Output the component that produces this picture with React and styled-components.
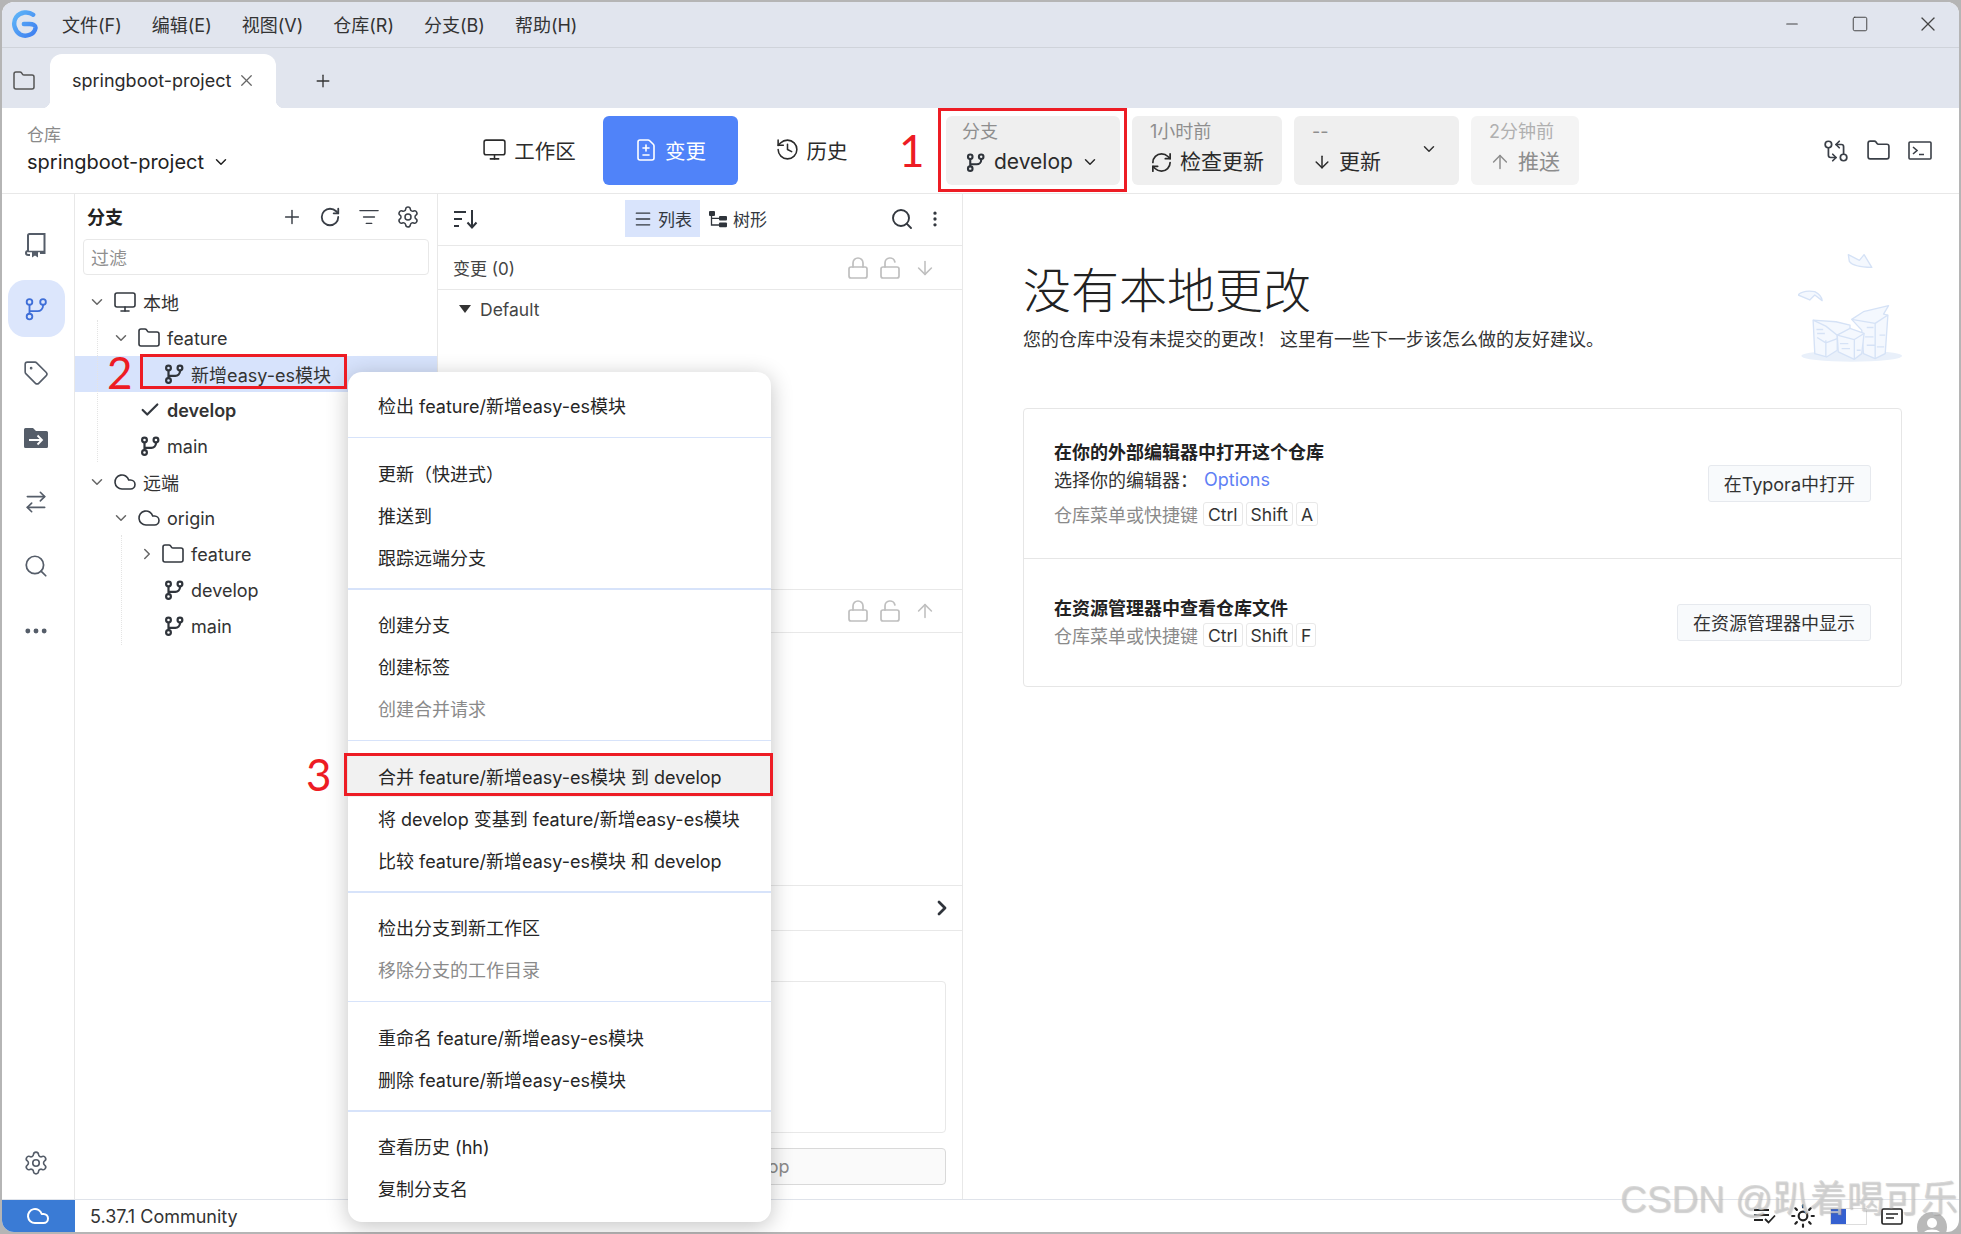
import styled, { createGlobalStyle } from "styled-components";
import {
  ArrowDown, ArrowRightLeft, ArrowUp, Check, ChevronDown, ChevronRight, Cloud, Ellipsis,
  EllipsisVertical, FileDiff, Folder, GitCompareArrows, History, ListFilter, Lock, LockOpen,
  Menu as MenuLines, Minus, Monitor, Plus, RefreshCw, RotateCw, Search, Settings, Square, Sun, Tag, X,
} from "lucide-react";

const GlobalStyle = createGlobalStyle`
  html, body { margin: 0; padding: 0; background: #b5b5b5; }
  * { box-sizing: border-box; }
  body {
    font-family: Inter, "Noto Sans CJK SC", sans-serif;
    font-size: 18px;
    color: #2b2b2b;
  }
`;

const Frame = styled.div`
  position: relative;
  width: 1961px;
  height: 1234px;
  padding: 2px;
  background: #b5b5b5;
  overflow: hidden;
`;

const Window = styled.div`
  display: flex;
  flex-direction: column;
  height: 100%;
  background: #fff;
  border-radius: 12px;
  overflow: hidden;
`;

/* title bar */
const TitleBar = styled.div`
  display: flex;
  align-items: center;
  height: 46px;
  flex: none;
  background: #e1e5ee;
  border-bottom: 1px solid #cfd3da;
  padding: 0 0 2px 9px;
`;

const MenuBar = styled.div`
  display: flex;
  gap: 30px;
  margin-left: 23px;
`;

const MenuLabel = styled.span`
  font-size: 18px;
  color: #333;
`;

const WinControls = styled.div`
  display: flex;
  gap: 6px;
  margin-left: auto;
`;

const WinButton = styled.div`
  display: flex;
  align-items: center;
  justify-content: center;
  width: 62px;
  color: #444;
`;

/* tabs */
const TabBar = styled.div`
  display: flex;
  align-items: flex-end;
  height: 60px;
  flex: none;
  background: #e1e5ee;
`;

const TabFolder = styled.div`
  display: flex;
  align-items: center;
  justify-content: center;
  width: 48px;
  height: 54px;
  padding-right: 5px;
  color: #555;
`;

const Tab = styled.div`
  position: relative;
  display: flex;
  align-items: center;
  gap: 6px;
  width: 226px;
  height: 54px;
  padding: 0 0 2px 22px;
  background: #fff;
  border-radius: 12px 12px 0 0;
  &::before, &::after {
    content: "";
    position: absolute;
    bottom: 0;
    width: 8px;
    height: 8px;
  }
  &::before { left: -8px; background: radial-gradient(circle at 0 0, #e1e5ee 8px, #fff 8.5px); }
  &::after { right: -8px; background: radial-gradient(circle at 100% 0, #e1e5ee 8px, #fff 8.5px); }
`;

const TabAdd = styled.div`
  display: flex;
  align-items: center;
  height: 54px;
  margin-left: 37px;
  color: #333;
`;

/* toolbar */
const Toolbar = styled.div`
  display: flex;
  align-items: center;
  height: 86px;
  flex: none;
  border-bottom: 1px solid #e8e8e8;
`;

const RepoBlock = styled.div`
  width: 459.5px;
  padding: 0 0 2px 25px;
`;

const RepoLabel = styled.div`
  font-size: 17px;
  line-height: 24px;
  color: #8a8a8a;
`;

const RepoName = styled.div`
  display: flex;
  align-items: center;
  gap: 8px;
  font-size: 20px;
  line-height: 30px;
  color: #222;
`;

const NavGroup = styled.div`
  display: flex;
  gap: 6px;
`;

const NavItem = styled.div`
  display: flex;
  align-items: center;
  justify-content: center;
  gap: 7px;
  width: 135px;
  height: 69px;
  padding-bottom: 2px;
  font-size: 20.5px;
  border-radius: 6px;
  color: ${(p) => (p.$active ? "#fff" : "#2b2b2b")};
  background: ${(p) => (p.$active ? "#5083f9" : "transparent")};
`;

const ActionGroup = styled.div`
  display: flex;
  gap: 12px;
  margin-left: 67.5px;
`;

const ActionButton = styled.div`
  position: relative;
  display: flex;
  flex-direction: column;
  justify-content: center;
  width: ${(p) => p.$w}px;
  height: 69px;
  padding: 0 0 3px ${(p) => p.$pad || 18}px;
  border-radius: 6px;
  background: ${(p) => (p.$muted ? "#f4f4f4" : "#efefef")};
`;

const ActionLabel = styled.div`
  font-size: 18px;
  line-height: 26px;
  color: ${(p) => (p.$muted ? "#b0b0b0" : "#8e8e8e")};
`;

const ActionMain = styled.div`
  display: flex;
  align-items: center;
  gap: ${(p) => p.$gap || 7}px;
  padding-left: ${(p) => p.$indent || 0}px;
  font-size: 21px;
  line-height: 34px;
  color: ${(p) => (p.$muted ? "#8d8d8d" : "#2b2b2b")};
`;

const Caret = styled.div`
  position: absolute;
  top: 24px;
  right: 21px;
  display: flex;
  color: #333;
`;

const ToolIcons = styled.div`
  display: flex;
  align-items: center;
  gap: 17px;
  margin-left: auto;
  padding-right: 27.5px;
  color: #3a3f47;
`;

/* body */
const Body = styled.div`
  display: flex;
  flex: 1;
  min-height: 0;
`;

const Rail = styled.div`
  display: flex;
  flex-direction: column;
  align-items: center;
  gap: 7.4px;
  width: 73px;
  flex: none;
  padding: 22px 4px 8px 0;
  border-right: 1px solid #e8e8e8;
  color: #555d69;
`;

const RailItem = styled.div`
  display: flex;
  align-items: center;
  justify-content: center;
  width: 57px;
  height: 57px;
  flex: none;
  border-radius: 17px;
  margin-top: ${(p) => (p.$bottom ? "auto" : "0")};
  color: ${(p) => (p.$active ? "#3f6fd8" : "inherit")};
  background: ${(p) => (p.$active ? "#dce6fc" : "transparent")};
`;

const BranchPanel = styled.div`
  width: 363px;
  flex: none;
  border-right: 1px solid #e8e8e8;
`;

const PanelHead = styled.div`
  display: flex;
  align-items: center;
  height: 45px;
  padding: 0 17px 0 12px;
`;

const PanelTitle = styled.div`
  font-size: 18px;
  font-weight: 700;
  color: #222;
  margin-top: -2px;
`;

const HeadIcons = styled.div`
  display: flex;
  align-items: center;
  gap: 16.5px;
  margin-left: auto;
  color: #3a3f47;
`;

const FilterBox = styled.div`
  display: flex;
  align-items: center;
  height: 36px;
  margin: 0 8px 9px;
  padding-left: 7px;
  border: 1px solid #e8e8e8;
  border-radius: 4px;
  color: #8f8f8f;
`;

const TreeRow = styled.div`
  display: flex;
  align-items: center;
  height: 36px;
  padding-left: ${(p) => 9 + p.$level * 24}px;
  font-weight: ${(p) => (p.$bold ? 600 : 400)};
  background: ${(p) => (p.$selected ? "#d7e3fc" : "transparent")};
  color: #333;
`;

const ChevronSlot = styled.div`
  display: flex;
  justify-content: center;
  width: 24px;
  flex: none;
  padding-left: ${(p) => (p.$closed ? 5 : 1)}px;
  color: #666;
`;

const IconSlot = styled.div`
  display: flex;
  width: 35px;
  flex: none;
  padding-left: ${(p) => (p.$leaf ? 6.5 : 5)}px;
  color: #33383f;
`;

const ChangesPanel = styled.div`
  display: flex;
  flex-direction: column;
  width: 525px;
  flex: none;
  border-right: 1px solid #e8e8e8;
`;

const ChangesBar = styled.div`
  display: flex;
  align-items: center;
  height: 52px;
  flex: none;
  padding: 0 17px 2px 15px;
  border-bottom: 1px solid #e8e8e8;
  color: #33383f;
`;

const ViewTab = styled.div`
  display: flex;
  align-items: center;
  gap: 5px;
  height: 37px;
  padding: 0 8px;
  font-size: 17px;
  background: ${(p) => (p.$active ? "#d9e4fc" : "transparent")};
`;

const ViewTabs = styled.div`
  display: flex;
  gap: 0;
  margin-left: 146px;
`;

const BarRight = styled.div`
  display: flex;
  align-items: center;
  gap: 11px;
  margin-left: auto;
`;

const SectionHead = styled.div`
  display: flex;
  align-items: center;
  height: ${(p) => p.$h || 44}px;
  flex: none;
  padding: 0 ${(p) => p.$right || 26}px 0 15px;
  border-bottom: 1px solid #e8e8e8;
  border-top: ${(p) => (p.$top ? "1px solid #e8e8e8" : "none")};
  font-size: 17px;
  color: #444;
`;

const SectionTools = styled.div`
  display: flex;
  align-items: center;
  gap: 8px;
  margin-left: auto;
  color: #bfbfbf;
  & > :last-child:not(:first-child) { margin-left: 4px; }
`;

const FileList = styled.div`
  flex: ${(p) => p.$grow};
  min-height: 0;
`;

const GroupRow = styled.div`
  display: flex;
  align-items: center;
  gap: 9px;
  height: 38px;
  padding-left: 21px;
  font-size: 17.5px;
  color: #444;
`;

const Triangle = styled.span`
  width: 0;
  height: 0;
  border-left: 6px solid transparent;
  border-right: 6px solid transparent;
  border-top: 8px solid #333;
`;

const CommitArea = styled.div`
  display: flex;
  flex-direction: column;
  flex: none;
  height: 268px;
  padding: 50px 16px 0 15px;
`;

const CommitBox = styled.div`
  height: 152px;
  flex: none;
  border: 1px solid #e8e8e8;
  border-radius: 4px;
`;

const CommitButton = styled.div`
  display: flex;
  align-items: center;
  justify-content: center;
  height: 37px;
  margin-top: 15px;
  padding-left: 20px;
  background: #fafafa;
  border: 1px solid #d9d9d9;
  border-radius: 4px;
  color: #8a8a8a;
`;

/* welcome */
const Welcome = styled.div`
  flex: 1;
  padding: 59px 57px 0 60px;
`;

const WelcomeHead = styled.div`
  display: flex;
  justify-content: space-between;
  height: 155px;
`;

const BigTitle = styled.div`
  font-size: 48px;
  line-height: 76px;
  height: 74px;
  font-weight: 300;
  color: #222;
`;

const SubTitle = styled.div`
  font-size: 18px;
  line-height: 26px;
  color: #333;
`;

const Card = styled.div`
  border: 1px solid #e6e6e6;
  border-radius: 4px;
`;

const CardRow = styled.div`
  display: flex;
  align-items: center;
  justify-content: space-between;
  height: ${(p) => p.$h}px;
  padding: 0 30px 1px;
  border-top: ${(p) => (p.$line ? "1px solid #e6e6e6" : "none")};
`;

const RowTitle = styled.div`
  font-weight: 700;
  font-size: 18px;
  line-height: 26px;
  color: #222;
`;

const RowText = styled.div`
  display: flex;
  align-items: center;
  height: ${(p) => p.$h || 26}px;
  margin-top: ${(p) => p.$mt || 0}px;
  font-size: 18px;
  color: ${(p) => (p.$muted ? "#8a8a8a" : "#333")};
`;

const LinkText = styled.span`
  margin-left: 6px;
  color: #5f7ff5;
`;

const Kbd = styled.span`
  display: inline-flex;
  align-items: center;
  height: 24px;
  padding: 0 4px;
  margin-left: ${(p) => (p.$first ? 5 : 3)}px;
  font-size: 17.5px;
  border: 1px solid #e8e8e8;
  border-radius: 3px;
  color: #333;
`;

const RowButton = styled.div`
  display: flex;
  align-items: center;
  height: 37px;
  padding: 0 15px;
  background: #f8fafc;
  border: 1px solid #e6e9ee;
  border-radius: 3px;
  font-size: 18px;
  color: #333;
`;

/* status bar */
const StatusBar = styled.div`
  display: flex;
  align-items: center;
  height: 33px;
  flex: none;
  border-top: 1px solid #dfe3ea;
`;

const CloudCell = styled.div`
  display: flex;
  align-items: center;
  justify-content: center;
  width: 73px;
  height: 100%;
  padding-right: 2px;
  background: #3a7bd5;
  color: #fff;
`;

const Version = styled.div`
  margin-left: 15px;
  font-size: 18px;
  color: #333;
`;

const StatusIcons = styled.div`
  display: flex;
  align-items: center;
  gap: 14px;
  height: 100%;
  margin-left: auto;
  padding-right: 12px;
  color: #222;
`;

const ProgressBox = styled.div`
  width: 37px;
  height: 17px;
  border: 1px solid #ddd;
  background: linear-gradient(90deg, #3560d0 43%, #fff 43%);
`;

const Avatar = styled.svg`
  align-self: flex-end;
`;

/* context menu */
const ContextMenu = styled.div`
  position: absolute;
  left: 348px;
  top: 372px;
  width: 423px;
  height: 850px;
  padding-top: 12px;
  background: #fff;
  border-radius: 14px;
  box-shadow: 0 4px 22px rgba(0, 0, 0, 0.24);
`;

const MenuRow = styled.div`
  display: flex;
  align-items: center;
  height: 42px;
  padding-left: 30px;
  font-size: 18px;
  color: ${(p) => (p.$disabled ? "#8a8a8a" : "#262626")};
  background: ${(p) => (p.$hover ? "#f1f1f1" : "transparent")};
`;

const MenuLine = styled.div`
  height: 1.5px;
  margin: 10.5px 0 13.5px;
  background: #d7e3fa;
`;

/* red notes drawn over the shot */
const RedBox = styled.div`
  position: absolute;
  left: ${(p) => p.$x}px;
  top: ${(p) => p.$y}px;
  width: ${(p) => p.$w}px;
  height: ${(p) => p.$h}px;
  border: 3px solid #ed1c24;
`;

const RedNum = styled.div`
  position: absolute;
  left: ${(p) => p.$x}px;
  top: ${(p) => p.$y}px;
  font-family: Lato, sans-serif;
  font-size: 44px;
  line-height: 46px;
  color: #ed1c24;
`;

const Watermark = styled.div`
  position: absolute;
  left: 1620px;
  top: 1177px;
  font-family: "Liberation Sans", "Noto Sans CJK SC", sans-serif;
  font-size: 37px;
  line-height: 46px;
  white-space: nowrap;
  color: rgba(205, 205, 205, 0.75);
  text-shadow: 1px 1px 1px rgba(120, 120, 120, 0.35);
`;

const Dots = styled.div`
  position: absolute;
  left: ${(p) => p.$x}px;
  top: ${(p) => p.$y}px;
  height: ${(p) => p.$h}px;
  border-left: 1px dotted #e4e4e4;
`;

/* drawn icons */
const Logo = () => (
  <svg width="28" height="28" viewBox="0 0 24 24" fill="none">
    <defs>
      <linearGradient id="lg" x1="0" y1="0" x2="1" y2="1">
        <stop offset="0" stopColor="#5fb6f8" />
        <stop offset="1" stopColor="#3f7ff0" />
      </linearGradient>
    </defs>
    <path
      d="M19 4C15 1 8 1.5 4.5 6C1 11 3 18 8 21C13 23.5 20 21 21 15.5C21.3 13 18.5 12 16 12L11 12"
      stroke="url(#lg)"
      strokeWidth="3.8"
      strokeLinecap="round"
    />
  </svg>
);

const BranchIcon = ({ size = 22, color = "#2f343b", width = 2.4 }) => (
  <svg width={size} height={size} viewBox="0 0 24 24" fill="none" stroke={color} strokeWidth={width}>
    <circle cx="6" cy="5.5" r="2.6" />
    <circle cx="18.5" cy="5.5" r="2.6" />
    <circle cx="6" cy="19" r="2.6" />
    <path d="M6 8.1V16.4" />
    <path d="M18.5 8.1V9a5 5 0 0 1-5 5H6" />
  </svg>
);

const BookIcon = () => (
  <svg width="26" height="28" viewBox="0 0 26 28" fill="none" stroke="currentColor" strokeWidth="2">
    <path d="M5 20V4.5A1.5 1.5 0 0 1 6.5 3H21.5V22H17" />
    <path d="M5 20A2 2 0 0 0 5 24H7" />
    <path d="M5 20.5H21.5" strokeWidth="1.4" />
    <path d="M9 21H15V26.5L12 24.5L9 26.5Z" fill="currentColor" stroke="none" />
  </svg>
);

const FolderMove = () => (
  <svg width="26" height="24" viewBox="0 0 26 24">
    <path d="M1 3.5A1.5 1.5 0 0 1 2.5 2H10L13 5H23.5A1.5 1.5 0 0 1 25 6.5V20.5A1.5 1.5 0 0 1 23.5 22H2.5A1.5 1.5 0 0 1 1 20.5Z" fill="#555d69" />
    <path d="M6 14H19M14.5 9.5L19 14L14.5 18.5" fill="none" stroke="#fff" strokeWidth="1.8" />
  </svg>
);

const SortIcon = () => (
  <svg width="26" height="22" viewBox="0 0 26 22" fill="none" stroke="#2f343b" strokeWidth="2">
    <path d="M1 4H13M1 11H9M1 18H6" />
    <path d="M19 2V19M14.5 14.5L19 19.5L23.5 14.5" />
  </svg>
);

const TreeIcon = () => (
  <svg width="20" height="18" viewBox="0 0 20 18" fill="#2f343b">
    <rect x="1" y="1" width="6" height="5" rx="1" />
    <rect x="11" y="6" width="8" height="4.6" rx="1" />
    <rect x="11" y="12.6" width="8" height="4.6" rx="1" />
    <path d="M3.5 6V15H11M3.5 8.3H11" fill="none" stroke="#2f343b" strokeWidth="1.3" />
  </svg>
);

const TerminalIcon = () => (
  <svg width="24" height="19" viewBox="0 0 24 19" fill="none" stroke="currentColor" strokeWidth="1.6">
    <rect x="1" y="1" width="22" height="17" rx="1" />
    <path d="M5 6L9 9.5L5 13M11 13.5H16" />
  </svg>
);

const TaskIcon = () => (
  <svg width="22" height="16" viewBox="0 0 22 16" fill="none" stroke="#222" strokeWidth="1.8">
    <path d="M0 2H15M0 7H15M0 12H9" />
    <path d="M11 11L14.5 14.5L21 7.5" />
  </svg>
);

const NoteIcon = () => (
  <svg width="22" height="17" viewBox="0 0 22 17" fill="none" stroke="#222" strokeWidth="1.7">
    <rect x="1" y="1" width="20" height="15" rx="1.5" />
    <path d="M5 6H17M5 10H13" />
  </svg>
);

const PaperPile = () => (
  <svg width="104" height="109" viewBox="115 40 310 325" fill="#f4f8fe" stroke="#d5e2f6" strokeWidth="4" strokeLinejoin="round">
    <ellipse cx="275" cy="347" rx="150" ry="17" fill="#e9f0fa" stroke="none" />
    <path d="M265 45L268 65Q280 82 335 83L312 45L298 62Z" />
    <path d="M115 165Q130 150 165 155Q185 165 187 182L165 165L150 180Z" />
    <path d="M160 240L228 245L270 255L270 270L232 285V330L200 350L165 340Z" />
    <path d="M160 240L198 258L232 285M198 300V350M172 292L198 308L232 295M170 268H190M172 280H195" fill="none" />
    <path d="M275 238L310 215L385 197L370 222L383 225L375 340L345 355L310 340L305 270Z" />
    <path d="M275 238L345 250V355M345 250L383 225M320 262H340M358 285H375M320 315H345M315 290H340M350 320H372" fill="none" />
    <path d="M232 285L270 265L312 280L305 340L283 357L235 335Z" />
    <path d="M232 285L283 298V357M283 298L312 280M245 325H270M290 330H302M240 310H265" fill="none" />
  </svg>
);

const AVATAR_BG = "#b9b9b9";

const menuGroups = [
  [["检出 feature/新增easy-es模块"]],
  [["更新（快进式）"], ["推送到"], ["跟踪远端分支"]],
  [["创建分支"], ["创建标签"], ["创建合并请求", "disabled"]],
  [["合并 feature/新增easy-es模块 到 develop", "hover"], ["将 develop 变基到 feature/新增easy-es模块"], ["比较 feature/新增easy-es模块 和 develop"]],
  [["检出分支到新工作区"], ["移除分支的工作目录", "disabled"]],
  [["重命名 feature/新增easy-es模块"], ["删除 feature/新增easy-es模块"]],
  [["查看历史 (hh)"], ["复制分支名"]],
];

const ShortcutKeys = ({ last, ...rest }) => (
  <RowText $muted {...rest}>
    仓库菜单或快捷键
    <Kbd $first>Ctrl</Kbd>
    <Kbd>Shift</Kbd>
    <Kbd>{last}</Kbd>
  </RowText>
);

const Node = ({ level, open, leaf, icon, children, ...rest }) => (
  <TreeRow $level={level} {...rest}>
    <ChevronSlot $closed={open === false}>
      {open === true && <ChevronDown size={18} />}
      {open === false && <ChevronRight size={18} />}
    </ChevronSlot>
    <IconSlot $leaf={leaf}>{icon}</IconSlot>
    {children}
  </TreeRow>
);

export default function App() {
  return (
    <Frame>
      <GlobalStyle />
      <Window>
        <TitleBar>
          <Logo />
          <MenuBar>
            {["文件(F)", "编辑(E)", "视图(V)", "仓库(R)", "分支(B)", "帮助(H)"].map((m) => (
              <MenuLabel key={m}>{m}</MenuLabel>
            ))}
          </MenuBar>
          <WinControls>
            <WinButton><Minus size={18} strokeWidth={1.5} /></WinButton>
            <WinButton><Square size={18} strokeWidth={1.3} /></WinButton>
            <WinButton><X size={24} strokeWidth={1.3} /></WinButton>
          </WinControls>
        </TitleBar>

        <TabBar>
          <TabFolder><Folder size={24} strokeWidth={1.5} /></TabFolder>
          <Tab>
            springboot-project
            <X size={19} color="#666" strokeWidth={1.6} />
          </Tab>
          <TabAdd><Plus size={20} strokeWidth={1.6} /></TabAdd>
        </TabBar>

        <Toolbar>
          <RepoBlock>
            <RepoLabel>仓库</RepoLabel>
            <RepoName>
              springboot-project
              <ChevronDown size={18} />
            </RepoName>
          </RepoBlock>
          <NavGroup>
            <NavItem><Monitor size={25} strokeWidth={1.5} />工作区</NavItem>
            <NavItem $active><FileDiff size={24} strokeWidth={1.6} />变更</NavItem>
            <NavItem><History size={25} strokeWidth={1.5} />历史</NavItem>
          </NavGroup>
          <ActionGroup>
            <ActionButton $w={174} $pad={16}>
              <ActionLabel>分支</ActionLabel>
              <ActionMain $indent={3} $gap={8}>
                <BranchIcon size={21} />
                develop
                <ChevronDown size={18} />
              </ActionMain>
            </ActionButton>
            <ActionButton $w={150}>
              <ActionLabel>1小时前</ActionLabel>
              <ActionMain><RefreshCw size={23} strokeWidth={1.8} />检查更新</ActionMain>
            </ActionButton>
            <ActionButton $w={165}>
              <ActionLabel>--</ActionLabel>
              <ActionMain><ArrowDown size={20} strokeWidth={1.8} />更新</ActionMain>
              <Caret><ChevronDown size={18} /></Caret>
            </ActionButton>
            <ActionButton $w={108} $muted>
              <ActionLabel $muted>2分钟前</ActionLabel>
              <ActionMain $muted><ArrowUp size={22} strokeWidth={1.6} />推送</ActionMain>
            </ActionButton>
          </ActionGroup>
          <ToolIcons>
            <GitCompareArrows size={26} strokeWidth={1.6} />
            <Folder size={25} strokeWidth={1.6} />
            <TerminalIcon />
          </ToolIcons>
        </Toolbar>

        <Body>
          <Rail>
            <RailItem><BookIcon /></RailItem>
            <RailItem $active><BranchIcon size={26} color="#3f6fd8" width={1.7} /></RailItem>
            <RailItem><Tag size={26} strokeWidth={1.5} /></RailItem>
            <RailItem><FolderMove /></RailItem>
            <RailItem><ArrowRightLeft size={26} strokeWidth={1.5} /></RailItem>
            <RailItem><Search size={26} strokeWidth={1.6} /></RailItem>
            <RailItem><Ellipsis size={28} strokeWidth={2.2} /></RailItem>
            <RailItem $bottom><Settings size={26} strokeWidth={1.5} /></RailItem>
          </Rail>

          <BranchPanel>
            <PanelHead>
              <PanelTitle>分支</PanelTitle>
              <HeadIcons>
                <Plus size={22} strokeWidth={1.6} />
                <RotateCw size={22} strokeWidth={2} />
                <ListFilter size={22} strokeWidth={1.4} />
                <Settings size={24} strokeWidth={1.5} />
              </HeadIcons>
            </PanelHead>
            <FilterBox>过滤</FilterBox>
            <Node level={0} open icon={<Monitor size={24} strokeWidth={1.6} />}>本地</Node>
            <Node level={1} open icon={<Folder size={24} strokeWidth={1.6} />}>feature</Node>
            <Node level={2} leaf $selected icon={<BranchIcon />}>新增easy-es模块</Node>
            <Node level={1} leaf $bold icon={<Check size={22} strokeWidth={2.4} />}>develop</Node>
            <Node level={1} leaf icon={<BranchIcon />}>main</Node>
            <Node level={0} open icon={<Cloud size={24} strokeWidth={1.6} />}>远端</Node>
            <Node level={1} open icon={<Cloud size={24} strokeWidth={1.6} />}>origin</Node>
            <Node level={2} open={false} icon={<Folder size={24} strokeWidth={1.6} />}>feature</Node>
            <Node level={2} leaf icon={<BranchIcon />}>develop</Node>
            <Node level={2} leaf icon={<BranchIcon />}>main</Node>
          </BranchPanel>

          <ChangesPanel>
            <ChangesBar>
              <SortIcon />
              <ViewTabs>
                <ViewTab $active><MenuLines size={20} strokeWidth={1.6} />列表</ViewTab>
                <ViewTab><TreeIcon />树形</ViewTab>
              </ViewTabs>
              <BarRight>
                <Search size={24} strokeWidth={1.9} />
                <EllipsisVertical size={20} />
              </BarRight>
            </ChangesBar>
            <SectionHead>
              变更 (0)
              <SectionTools>
                <Lock size={24} strokeWidth={1.7} />
                <LockOpen size={24} strokeWidth={1.7} />
                <ArrowDown size={22} strokeWidth={1.7} />
              </SectionTools>
            </SectionHead>
            <FileList $grow="297">
              <GroupRow><Triangle />Default</GroupRow>
            </FileList>
            <SectionHead $top>
              暂存 (0)
              <SectionTools>
                <Lock size={24} strokeWidth={1.7} />
                <LockOpen size={24} strokeWidth={1.7} />
                <ArrowUp size={22} strokeWidth={1.7} />
              </SectionTools>
            </SectionHead>
            <FileList $grow="251" />
            <SectionHead $top $h={46} $right={8}>
              <SectionTools><ChevronRight size={24} color="#2f343b" strokeWidth={2.8} /></SectionTools>
            </SectionHead>
            <CommitArea>
              <CommitBox />
              <CommitButton>Commit to develop</CommitButton>
            </CommitArea>
          </ChangesPanel>

          <Welcome>
            <WelcomeHead>
              <div>
                <BigTitle>没有本地更改</BigTitle>
                <SubTitle>您的仓库中没有未提交的更改！ 这里有一些下一步该怎么做的友好建议。</SubTitle>
              </div>
              <PaperPile />
            </WelcomeHead>
            <Card>
              <CardRow $h={149}>
                <div>
                  <RowTitle>在你的外部编辑器中打开这个仓库</RowTitle>
                  <RowText>选择你的编辑器：<LinkText>Options</LinkText></RowText>
                  <ShortcutKeys last="A" $h={24} $mt={10} />
                </div>
                <RowButton>在Typora中打开</RowButton>
              </CardRow>
              <CardRow $h={128} $line>
                <div>
                  <RowTitle>在资源管理器中查看仓库文件</RowTitle>
                  <ShortcutKeys last="F" />
                </div>
                <RowButton>在资源管理器中显示</RowButton>
              </CardRow>
            </Card>
          </Welcome>
        </Body>

        <StatusBar>
          <CloudCell><Cloud size={24} strokeWidth={2} /></CloudCell>
          <Version>5.37.1 Community</Version>
          <StatusIcons>
            <TaskIcon />
            <Sun size={26} strokeWidth={2} />
            <ProgressBox />
            <NoteIcon />
            <Avatar width="30" height="20" viewBox="0 0 30 20">
              <circle cx="15" cy="15" r="15" fill={AVATAR_BG} />
              <circle cx="15" cy="11" r="5" fill="#fff" />
              <path d="M6 22C7 16 23 16 24 22Z" fill="#fff" />
            </Avatar>
          </StatusIcons>
        </StatusBar>
      </Window>

      <Dots $x={97} $y={320} $h={142} />
      <Dots $x={121} $y={535} $h={110} />

      <ContextMenu>
        {menuGroups.map((group, i) => (
          <div key={i}>
            {i > 0 && <MenuLine />}
            {group.map(([label, kind]) => (
              <MenuRow key={label} $disabled={kind === "disabled"} $hover={kind === "hover"}>{label}</MenuRow>
            ))}
          </div>
        ))}
      </ContextMenu>

      <RedBox $x={938} $y={108} $w={189} $h={84} />
      <RedBox $x={140} $y={354} $w={207} $h={35} />
      <RedBox $x={344} $y={753} $w={429} $h={43} />
      <RedNum $x={899} $y={127}>1</RedNum>
      <RedNum $x={107} $y={349}>2</RedNum>
      <RedNum $x={306} $y={751}>3</RedNum>
      <Watermark>CSDN @趴着喝可乐</Watermark>
    </Frame>
  );
}
